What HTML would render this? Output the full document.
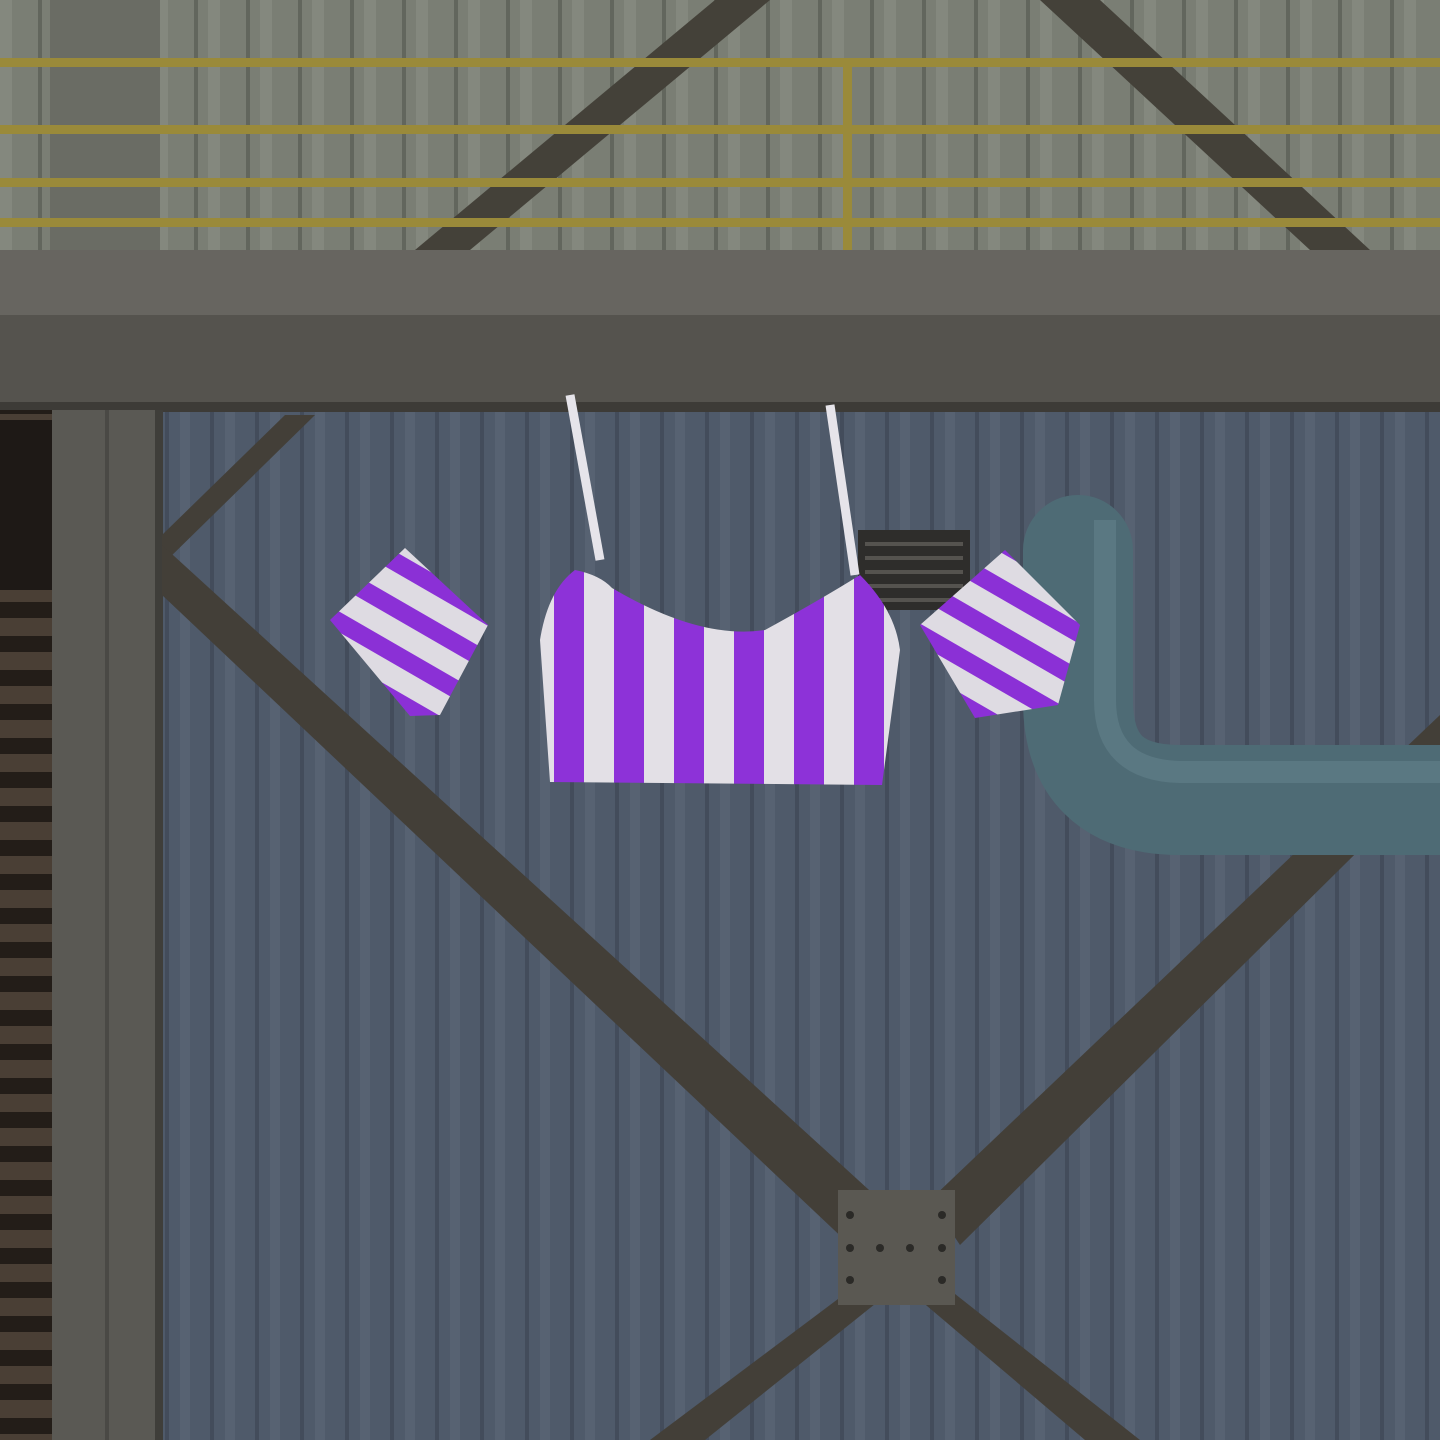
<!DOCTYPE html>
<html><head><style>html,body{margin:0;padding:0;background:#4f5867}svg{display:block}</style></head><body>
<svg width="1440" height="1440" viewBox="0 0 1440 1440" xmlns="http://www.w3.org/2000/svg">
<defs>
<pattern id="cor" width="45" height="100" patternUnits="userSpaceOnUse"><rect width="45" height="100" fill="#4f5a6a"/><rect x="0" width="10" height="100" fill="#576272"/><rect x="30" width="4" height="100" fill="#434c5b"/></pattern>
<pattern id="cor2" width="52" height="100" patternUnits="userSpaceOnUse"><rect width="52" height="100" fill="#7a7e74"/><rect x="0" width="12" height="100" fill="#84887e"/><rect x="38" width="4" height="100" fill="#62665d"/></pattern>
<pattern id="vent" width="50" height="34" patternUnits="userSpaceOnUse"><rect width="50" height="34" fill="#231d18"/><rect y="6" width="50" height="18" fill="#4a3f35"/></pattern>
<pattern id="str" width="60" height="300" patternUnits="userSpaceOnUse"><rect width="60" height="300" fill="#e3e0e6"/><rect x="14" width="30" height="300" fill="#8d32d8"/></pattern>
<pattern id="str2" width="40" height="40" patternUnits="userSpaceOnUse" patternTransform="rotate(30)"><rect width="40" height="40" fill="#dedbe2"/><rect y="0" width="40" height="18" fill="#8b30d6"/></pattern>
</defs>
<rect width="1440" height="1440" fill="url(#cor)"/>
<rect y="0" width="1440" height="255" fill="url(#cor2)"/>
<rect x="50" y="0" width="110" height="255" fill="#6a6c64"/>
<polygon points="415,250 470,250 770,0 715,0" fill="#444139"/>
<polygon points="1040,0 1100,0 1370,250 1310,250" fill="#444139"/>
<g fill="#9a8a3a"><rect y="58" width="1440" height="9"/><rect y="125" width="1440" height="9"/><rect y="178" width="1440" height="9"/><rect y="218" width="1440" height="9"/><rect x="843" y="58" width="9" height="192"/></g>
<rect y="250" width="1440" height="70" fill="#676560"/>
<rect y="315" width="1440" height="95" fill="#55534e"/>
<rect y="402" width="1440" height="10" fill="#3d3b37"/>
<rect x="0" y="410" width="55" height="1030" fill="url(#vent)"/>
<rect x="0" y="420" width="55" height="170" fill="#1e1916"/>
<rect x="52" y="410" width="110" height="1030" fill="#5a5954"/>
<rect x="105" y="410" width="4" height="1030" fill="#4a4945"/>
<rect x="155" y="410" width="8" height="1030" fill="#3f3e3a"/>
<g fill="#433f38">
<polygon points="162,535 285,415 315,415 162,565"/>
<polygon points="162,545 162,595 850,1245 880,1200"/>
<polygon points="1440,715 1440,770 960,1245 930,1200"/>
<polygon points="850,1290 880,1300 705,1440 650,1440"/>
<polygon points="950,1290 920,1300 1085,1440 1140,1440"/>
</g>
<rect x="838" y="1190" width="117" height="115" fill="#5a5852"/>
<g fill="#2b2a27"><circle cx="850" cy="1215" r="4"/><circle cx="942" cy="1215" r="4"/><circle cx="850" cy="1248" r="4"/><circle cx="942" cy="1248" r="4"/><circle cx="850" cy="1280" r="4"/><circle cx="942" cy="1280" r="4"/><circle cx="880" cy="1248" r="4"/><circle cx="910" cy="1248" r="4"/></g>
<rect x="858" y="530" width="112" height="80" fill="#2e2d2b"/>
<g fill="#55534f"><rect x="865" y="542" width="98" height="4"/><rect x="865" y="556" width="98" height="4"/><rect x="865" y="570" width="98" height="4"/><rect x="865" y="584" width="98" height="4"/><rect x="865" y="598" width="98" height="4"/></g>
<path d="M1078,550 L1078,700 Q1078,800 1180,800 L1440,800" fill="none" stroke="#4e6b75" stroke-width="110" stroke-linecap="round"/>
<path d="M1105,520 L1105,700 Q1105,770 1180,772 L1440,772" fill="none" stroke="#5a7882" stroke-width="22"/>
<path d="M570,395 L600,560" stroke="#e6e4ea" stroke-width="9" fill="none"/>
<path d="M830,405 L855,575" stroke="#e6e4ea" stroke-width="9" fill="none"/>
<path d="M575,570 Q600,575 612,588 Q700,640 765,630 Q820,600 860,575 Q895,610 900,650 L882,785 L550,782 L540,640 Q548,590 575,570 Z" fill="url(#str)"/>
<path d="M330,620 L405,548 L488,625 L440,715 L410,716 Z" fill="url(#str2)"/>
<path d="M920,625 L1005,550 L1080,625 L1058,705 L975,718 Z" fill="url(#str2)"/>
</svg>
</body></html>
